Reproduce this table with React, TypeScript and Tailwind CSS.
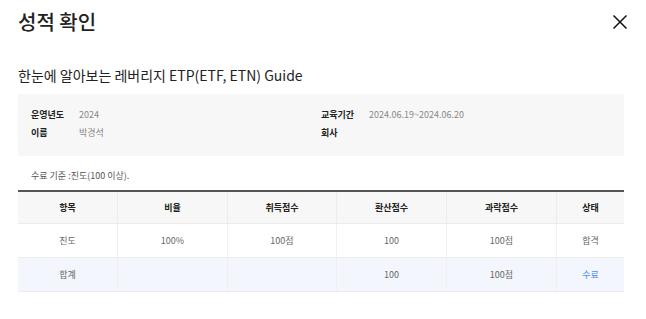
import React from 'react';

const font = { fontFamily: '"Noto Sans CJK KR", "Noto Sans", sans-serif' };

const cols = ['w-[100px]', 'w-[110px]', 'w-[109px]', 'w-[110px]', 'w-[110px]', ''];

const headers = ['항목', '비율', '취득점수', '환산점수', '과락점수', '상태'];

const rows = [
  { cells: ['진도', '100%', '100점', '100', '100점', '합격'], bg: 'bg-white', last: 'text-[#666]' },
  { cells: ['합계', '', '', '100', '100점', '수료'], bg: 'bg-[#f3f6fd]', last: 'text-[#4a8cf0]' },
];

export default function App() {
  return (
    <div className="w-[646px] h-[319px] bg-white pl-[18px] pr-[22px] text-[#222]" style={font}>
      <div className="flex h-[44px] items-center justify-between">
        <h1 className="text-[20px] font-medium leading-none text-[#222]">성적 확인</h1>
        <svg width="16" height="16" viewBox="0 0 16 16" className="mr-[-4px]">
          <path d="M1.5 1.5 L14.5 14.5 M14.5 1.5 L1.5 14.5" stroke="#111" strokeWidth="1.5" />
        </svg>
      </div>

      <p className="mt-[21px] text-[14px] leading-[20px] text-[#222]">한눈에 알아보는 레버리지 ETP(ETF, ETN) Guide</p>

      <div className="mt-[9px] grid grid-cols-2 bg-[#f7f7f7] px-[13px] pt-[12px] pb-[14px] text-[9px]">
        <div className="flex h-[18px] items-center">
          <span className="w-[48px] font-bold text-[#222]">운영년도</span>
          <span className="text-[#888]">2024</span>
        </div>
        <div className="flex h-[18px] items-center">
          <span className="w-[48px] font-bold text-[#222]">교육기간</span>
          <span className="text-[#888]">2024.06.19~2024.06.20</span>
        </div>
        <div className="flex h-[18px] items-center">
          <span className="w-[48px] font-bold text-[#222]">이름</span>
          <span className="text-[#888]">박경석</span>
        </div>
        <div className="flex h-[18px] items-center">
          <span className="w-[48px] font-bold text-[#222]">회사</span>
          <span className="text-[#888]"></span>
        </div>
      </div>

      <p className="mt-[13px] pl-[13px] text-[9px] leading-[14px] text-[#555]">수료 기준 :진도(100 이상).</p>

      <div className="mt-[7px] border-t-2 border-[#555] text-[9px]">
        <div className="flex h-[32px] bg-[#f7f7f7] border-b border-[#ececec]">
          {headers.map((h, i) => (
            <div
              key={h}
              className={`${cols[i] || 'flex-1'} flex items-center justify-center font-bold text-[#222] ${i < 5 ? 'border-r border-[#ececec]' : ''}`}
            >
              {h}
            </div>
          ))}
        </div>
        {rows.map((r, ri) => (
          <div key={ri} className={`flex h-[34px] ${r.bg} border-b border-[#ececec]`}>
            {r.cells.map((c, i) => (
              <div
                key={i}
                className={`${cols[i] || 'flex-1'} flex items-center justify-center ${i === 5 ? r.last : 'text-[#666]'} ${i < 5 ? 'border-r border-[#f0f0f0]' : ''}`}
              >
                {c}
              </div>
            ))}
          </div>
        ))}
      </div>
    </div>
  );
}
